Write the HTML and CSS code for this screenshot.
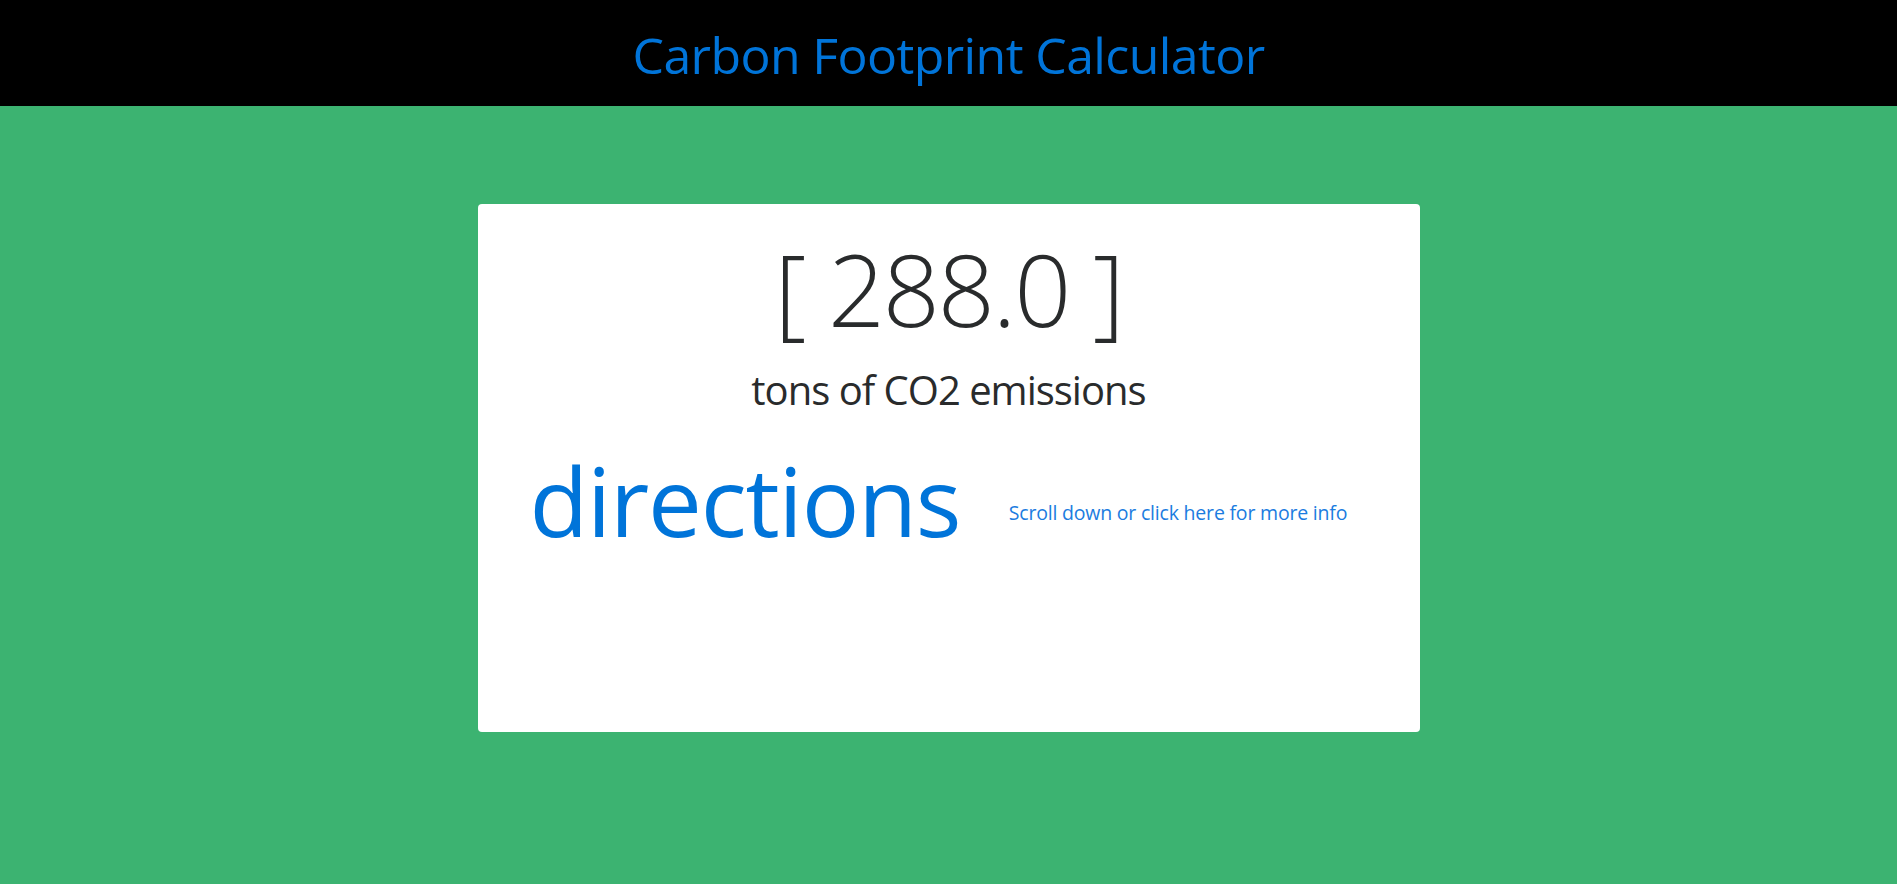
FILE: index.html
```html
<!DOCTYPE html>
<html lang="en">
<head>
<meta charset="utf-8">
<title>Carbon Footprint Calculator</title>
<link rel="stylesheet" href="styles.css">
</head>
<body>
<header class="topbar">
  <h1 class="title">Carbon Footprint Calculator</h1>
</header>
<main class="stage">
  <section class="card">
    <div class="result">[ 288.0 ]</div>
    <div class="unit">tons of CO2 emissions</div>
    <div class="row">
      <div class="col col-left"><span class="directions">directions</span></div>
      <div class="col col-right"><a class="more" href="#info">Scroll down or click here for more info</a></div>
    </div>
  </section>
</main>
</body>
</html>
```

FILE: styles.css
```css
* { box-sizing: border-box; }
html, body { margin: 0; padding: 0; }
body {
  font-family: "Open Sans", "Noto Sans", "Liberation Sans", sans-serif;
  color: #292b2c;
  background: #3cb371;
}
.topbar {
  height: 106px;
  background: #000;
  display: flex;
  align-items: center;
  justify-content: center;
}
.title {
  margin: 0;
  font-size: 50px;
  font-weight: 500;
  line-height: 1.2;
  letter-spacing: -0.6px;
  color: #0074d9;
  padding-top: 4px;
}
.stage {
  min-height: 778px;
  padding-top: 98px;
  background: #3cb371;
}
.card {
  width: 942px;
  height: 528px;
  margin: 0 auto;
  background: #fff;
  border-radius: 4px;
  padding-top: 24px;
}
.result {
  text-align: center;
  font-size: 100px;
  font-weight: 300;
  line-height: 1.2;
  letter-spacing: -2.2px;
}
.unit {
  text-align: center;
  font-size: 40px;
  line-height: 1.2;
  margin-top: 18px;
  letter-spacing: -1px;
}
.row {
  display: grid;
  grid-template-columns: 1fr 1fr;
  align-items: center;
  margin-top: 28px;
}
.col-left { padding-left: 52px; }
.col-right { text-align: center; padding-top: 26px; padding-right: 24px; }
.directions {
  font-size: 96px;
  line-height: 1.2;
  color: #0074d9;
  letter-spacing: -1.2px;
}
.more {
  font-size: 19.5px;
  color: #1c7ce0;
  text-decoration: none;
  letter-spacing: -0.2px;
}
```
